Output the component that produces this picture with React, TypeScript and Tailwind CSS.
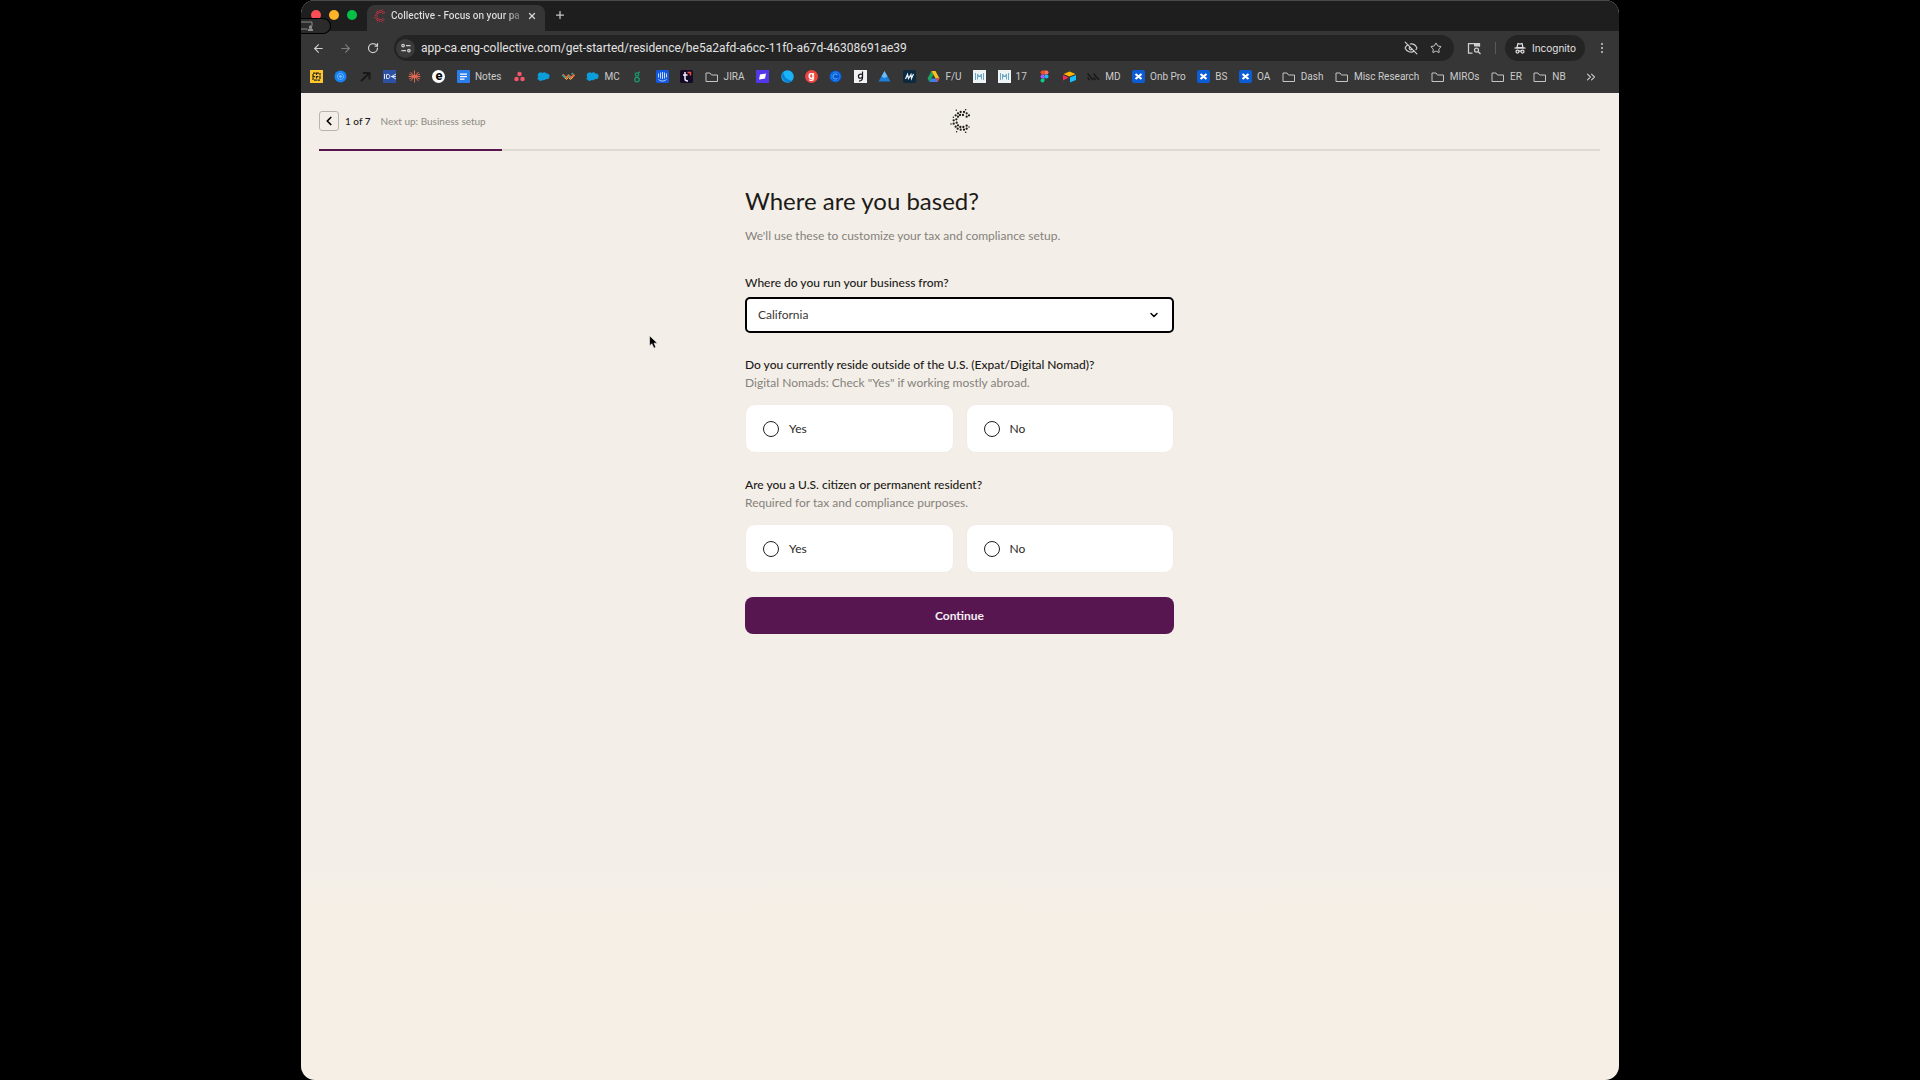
import { useState } from "react";
import type { ReactNode } from "react";
import {
  ArrowLeft,
  ArrowRight,
  ChevronDown,
  ChevronLeft,
  ChevronsRight,
  EyeOff,
  Plus,
  RotateCw,
  Star,
  X,
} from "lucide-react";

const LOGO_DOTS = [
  [119, 51], [129, 51], [111, 55], [137, 55], [104, 61], [117, 60], [126, 60],
  [137, 65], [144, 61], [111, 65], [98, 76], [106, 73], [98, 86], [107, 83],
  [104, 95], [111, 91], [110, 101], [118, 96], [127, 96], [137, 92],
  [137, 101], [119, 104], [129, 104],
];
const LOGO_SMALL_DOTS = [
  [106, 46], [134, 44], [97, 67], [90, 87], [144, 96], [107, 110], [134, 112],
];

const Logo = ({ className }: { className: string }) => (
  <svg viewBox="87 42 60 72" className={className} fill="currentColor">
    {LOGO_DOTS.map(([x, y]) => (
      <circle key={`${x}-${y}`} cx={x} cy={y} r="3.4" />
    ))}
    {LOGO_SMALL_DOTS.map(([x, y]) => (
      <circle key={`${x}-${y}`} cx={x} cy={y} r="2.2" />
    ))}
  </svg>
);

const Svg = ({ children }: { children: ReactNode }) => (
  <svg viewBox="0 0 26 26" className="size-[13px] shrink-0" fill="none">
    {children}
  </svg>
);

const FolderIcon = () => (
  <svg
    viewBox="0 0 28 24"
    className="h-3 w-[14px] shrink-0 text-[#c4c4c4]"
    fill="none"
    stroke="currentColor"
    strokeWidth="2"
  >
    <path d="M2 4h8l3 4h12v13H2z" strokeLinejoin="round" />
  </svg>
);

const Cloud = () => (
  <Svg>
    <path
      d="M3 14a5 5 0 0 1 1-8 6 6 0 0 1 7 0 6 6 0 0 1 8 1 5 5 0 0 1 6 6c0 4-3 6-7 5-2 3-5 3-7 2-3 3-7 2-8-1-3 0-3-3 0-5z"
      fill="#0c9ddb"
    />
  </Svg>
);

const Miro = () => (
  <Svg>
    <rect width="26" height="26" fill="#eef3f6" />
    <path d="M5 6v14M21 6v14M9 19V8l4 5 4-5v11M9 13h8" stroke="#6ba8c4" strokeWidth="2" />
  </Svg>
);

const Confluence = () => (
  <Svg>
    <rect width="26" height="26" rx="4" fill="#0b5cd5" />
    <path d="m7 8 12 10M19 8 7 18" stroke="#fff" strokeWidth="4.5" />
  </Svg>
);

type Bookmark = { icon: ReactNode; label?: string; name: string };

const bookmarks: Bookmark[] = [
  {
    name: "Grid",
    icon: (
      <Svg>
        <rect width="26" height="26" fill="#fcc62f" />
        <path d="M6 6h14v14H6zM13 5v16M5 13h16" stroke="#2a2418" strokeWidth="2.5" strokeDasharray="5 2" />
      </Svg>
    ),
  },
  {
    name: "Atom",
    icon: (
      <Svg>
        <circle cx="13" cy="13" r="12" fill="#1682f5" />
        <circle cx="13" cy="13" r="6" stroke="#8cc6ff" strokeWidth="2" strokeDasharray="3 1" />
        <circle cx="13" cy="13" r="2.5" fill="#8cc6ff" />
      </Svg>
    ),
  },
  {
    name: "Arrow",
    icon: (
      <Svg>
        <path d="M4 22 20 7M8 6h13v13" stroke="#191919" strokeWidth="4" />
      </Svg>
    ),
  },
  {
    name: "ID",
    icon: (
      <Svg>
        <rect width="26" height="26" fill="#2d51a3" />
        <path d="M3 8v10M7 9v8h3c5 0 5-8 0-8zM26 8l-9 5 9 5M16 13h10" stroke="#d9e2f5" strokeWidth="2" />
      </Svg>
    ),
  },
  {
    name: "Claude",
    icon: (
      <Svg>
        <path
          d="M13 1v24M1 13h24M5 4l16 18M21 4 5 22M2 8l22 10M24 8 2 18"
          stroke="#dd6a50"
          strokeWidth="2"
        />
      </Svg>
    ),
  },
  {
    name: "E",
    icon: (
      <span className="flex size-[13px] items-center justify-center rounded-full bg-white text-[13px] leading-none font-bold text-black">
        <span className="pb-[2px]">e</span>
      </span>
    ),
  },
  {
    name: "Notes",
    label: "Notes",
    icon: (
      <Svg>
        <rect width="26" height="26" rx="2" fill="#2b7de9" />
        <path d="M6 8h14M6 13h14M6 18h9" stroke="#fff" strokeWidth="2.5" />
      </Svg>
    ),
  },
  {
    name: "Asana",
    icon: (
      <Svg>
        <circle cx="13" cy="8" r="4.5" fill="#f0576a" />
        <circle cx="7" cy="18" r="4.5" fill="#f0576a" />
        <circle cx="19" cy="18" r="4.5" fill="#f0576a" />
      </Svg>
    ),
  },
  { name: "Salesforce", icon: <Cloud /> },
  {
    name: "Workato",
    icon: (
      <Svg>
        <path d="m1 9 7 7 5-5 5 5 7-7" stroke="#f0643c" strokeWidth="4" />
        <path d="m3 13 6 6 4-4 4 4 6-6" stroke="#f3b23f" strokeWidth="2" />
        <path d="m1 10 6 6M12 15l4-4M19 9l3-3" stroke="#27ae8f" strokeWidth="3" />
      </Svg>
    ),
  },
  { name: "MC", label: "MC", icon: <Cloud /> },
  {
    name: "Greenhouse",
    icon: (
      <Svg>
        <circle cx="12" cy="9" r="3.5" stroke="#179b6b" strokeWidth="2.5" />
        <circle cx="12" cy="19" r="4.5" stroke="#179b6b" strokeWidth="2.5" />
        <path d="M14 6c2 0 3-1 3-3" stroke="#179b6b" strokeWidth="2.5" />
      </Svg>
    ),
  },
  {
    name: "Intercom",
    icon: (
      <Svg>
        <rect width="26" height="26" rx="3" fill="#1258e0" />
        <path d="M5 7v8M9 5v12M13 4v14M17 5v12M21 7v8M5 19c5 4 11 4 16 0" stroke="#c9dcff" strokeWidth="2" />
      </Svg>
    ),
  },
  {
    name: "T",
    icon: (
      <Svg>
        <rect width="26" height="26" rx="3" fill="#150a26" />
        <path d="M10 4v14c0 3 2 4 6 4M6 10h9" stroke="#f5f0ff" strokeWidth="3" />
        <path d="M15 5h6v6" stroke="#f0503c" strokeWidth="3" />
      </Svg>
    ),
  },
  { name: "JIRA", label: "JIRA", icon: <FolderIcon /> },
  {
    name: "Purple",
    icon: (
      <Svg>
        <rect width="26" height="26" fill="#5238e8" />
        <path d="m8 9 12-2-2 10-12 2z" fill="#fff" />
      </Svg>
    ),
  },
  {
    name: "Sphere",
    icon: (
      <Svg>
        <circle cx="13" cy="13" r="12.5" fill="#19b4f5" />
        <path d="M5 4c0 9 6 15 17 18A12.5 12.5 0 0 1 5 4z" fill="#0a7fd6" />
      </Svg>
    ),
  },
  {
    name: "G",
    icon: (
      <span className="flex size-[13px] items-center justify-center rounded-full bg-[#ee443f] text-[11px] leading-none font-bold text-white">
        <span className="pb-[3px]">g</span>
      </span>
    ),
  },
  {
    name: "C",
    icon: (
      <Svg>
        <circle cx="13" cy="13" r="12" fill="#0a55c8" />
        <circle cx="13" cy="13" r="9" stroke="#1f8bff" strokeWidth="2" />
        <path d="M17 10a5 5 0 1 0 0 6" stroke="#46a3ff" strokeWidth="2.5" />
      </Svg>
    ),
  },
  {
    name: "Gd",
    icon: (
      <Svg>
        <rect width="26" height="26" fill="#f2f2f5" />
        <path d="M17 3v12c0 4-2 7-7 7M17 9c-6-2-9 1-8 5s6 3 8-1" stroke="#1b1b22" strokeWidth="2.5" />
      </Svg>
    ),
  },
  {
    name: "Peak",
    icon: (
      <Svg>
        <path d="M13 2 25 23H1z" fill="#1c7fdc" />
        <path d="M13 2 19 13l-6 3-6-3z" fill="#6cbcf5" />
      </Svg>
    ),
  },
  {
    name: "M",
    icon: (
      <Svg>
        <rect width="26" height="26" rx="3" fill="#0c2a3f" />
        <path d="m5 18 4-9 2 8 5-8 1 8 4-9" stroke="#e6f2fa" strokeWidth="2.5" />
      </Svg>
    ),
  },
  {
    name: "Drive",
    label: "F/U",
    icon: (
      <Svg>
        <path d="M9 2 1 17l4 7 8-15z" fill="#1da562" />
        <path d="M9 2h8l8 15h-8z" fill="#fbbf1b" />
        <path d="M9 17h16l-4 7H5z" fill="#3f7ff0" />
        <path d="M25 17h-8l4 7z" fill="#e8453c" />
      </Svg>
    ),
  },
  { name: "Metrics", icon: <Miro /> },
  { name: "17", label: "17", icon: <Miro /> },
  {
    name: "Figma",
    icon: (
      <Svg>
        <path d="M13 1H9a4 4 0 0 0 0 8h4z" fill="#f24e1e" />
        <path d="M13 1h4a4 4 0 0 1 0 8h-4z" fill="#ff7262" />
        <path d="M13 9H9a4 4 0 0 0 0 8h4z" fill="#a259ff" />
        <circle cx="17" cy="13" r="4" fill="#1abcfe" />
        <path d="M9 17h4v4a4 4 0 1 1-4-4z" fill="#0acf83" />
      </Svg>
    ),
  },
  {
    name: "Airtable",
    icon: (
      <Svg>
        <path d="m1 8 12-5 12 5-12 5z" fill="#fcb400" />
        <path d="M14 15 26 10v10l-12 5z" fill="#18bfff" />
        <path d="m0 10 11 5-11 6z" fill="#f82b60" />
      </Svg>
    ),
  },
  {
    name: "MD",
    label: "MD",
    icon: (
      <Svg>
        <path d="m1 7 11 13M13 7l11 13M1 15l4 5M13 15l4 5" stroke="#181818" strokeWidth="3" />
      </Svg>
    ),
  },
  { name: "Onb Pro", label: "Onb Pro", icon: <Confluence /> },
  { name: "BS", label: "BS", icon: <Confluence /> },
  { name: "OA", label: "OA", icon: <Confluence /> },
  { name: "Dash", label: "Dash", icon: <FolderIcon /> },
  { name: "Misc Research", label: "Misc Research", icon: <FolderIcon /> },
  { name: "MIROs", label: "MIROs", icon: <FolderIcon /> },
  { name: "ER", label: "ER", icon: <FolderIcon /> },
  { name: "NB", label: "NB", icon: <FolderIcon /> },
];

const TabStrip = () => (
  <div className="flex h-[31px] items-end border-t border-[#4a4a4a] bg-[#1e1e1e] pl-[10px]">
    <div className="flex h-[30px] items-center gap-2 pb-[2px]">
      <span className="size-[10px] rounded-full bg-[#fb4d55]" />
      <span className="size-[10px] rounded-full bg-[#fdb429]" />
      <span className="size-[10px] rounded-full bg-[#05c046]" />
    </div>
    <div className="ml-[10px] flex h-[26px] w-[178px] items-center rounded-t-lg bg-[#363636] pr-2 pb-[5px] pl-[6px]">
      <Logo className="h-[14px] w-3 shrink-0 text-[#d83049]" />
      <span className="ml-[6px] flex-1 bg-linear-to-r from-[#dedede] from-85% to-[#363636] bg-clip-text font-['Roboto',sans-serif] text-[10px] leading-4 font-medium whitespace-nowrap text-transparent">
        Collective - Focus on your pa
      </span>
      <button aria-label="Close tab" className="text-[#d8d8d8]">
        <X className="size-[10px]" strokeWidth={3} />
      </button>
    </div>
    <button aria-label="New tab" className="ml-[9px] pb-[10px] text-[#c8c8c8]">
      <Plus className="size-3" strokeWidth={2.5} />
    </button>
  </div>
);

const Toolbar = () => (
  <div className="flex h-[34px] items-center bg-[#363636] pr-4 pl-[11px] text-[#cfcfcf]">
    <button aria-label="Back">
      <ArrowLeft className="size-[13px]" strokeWidth={2} />
    </button>
    <button aria-label="Forward" className="ml-[14px] text-[#7d7d7d]">
      <ArrowRight className="size-[13px]" strokeWidth={2} />
    </button>
    <button aria-label="Reload" className="ml-[15px]">
      <RotateCw className="size-3" strokeWidth={2.5} />
    </button>
    <div className="ml-[15px] flex h-[26px] flex-1 items-center rounded-full bg-[#242424] pr-3 pl-[2px]">
      <button
        aria-label="Site settings"
        className="flex size-[19px] items-center justify-center rounded-full bg-[#3a3a3a]"
      >
        <svg viewBox="0 0 24 24" className="size-[10px]" fill="none" stroke="currentColor" strokeWidth="3">
          <circle cx="5" cy="6" r="3" />
          <path d="M12 6h11M1 18h11" />
          <circle cx="19" cy="18" r="3" />
        </svg>
      </button>
      <input
        aria-label="Address"
        className="ml-[6px] min-w-0 flex-1 bg-transparent font-['Roboto',sans-serif] text-xs text-[#e2e2e2] outline-none"
        defaultValue="app-ca.eng-collective.com/get-started/residence/be5a2afd-a6cc-11f0-a67d-46308691ae39"
      />
      <EyeOff className="size-[14px]" strokeWidth={2} />
      <button aria-label="Bookmark this tab" className="ml-3">
        <Star className="size-3" strokeWidth={2} />
      </button>
    </div>
    <button aria-label="Search side panel" className="ml-[13px]">
      <svg viewBox="0 0 28 26" className="h-[13px] w-[14px]" fill="none" stroke="currentColor" strokeWidth="2.5">
        <path d="M11 22H3V3h22v6" />
        <path d="M14 2h12v7H14z" fill="currentColor" stroke="none" />
        <circle cx="19" cy="16" r="4" />
        <path d="m22 19 5 5" />
      </svg>
    </button>
    <span className="ml-[14px] h-3 w-px bg-[#5a5a5a]" />
    <div className="ml-[9px] flex h-[26px] w-20 items-center gap-[6px] rounded-full bg-[#242424] pl-[9px] text-[#e2e2e2]">
      <svg viewBox="0 0 24 24" className="size-3 shrink-0" fill="none" stroke="currentColor" strokeWidth="2.5">
        <path d="M1 12h22" />
        <path d="m6 11 2-8 4 1 4-1 2 8z" />
        <circle cx="7" cy="19" r="3" />
        <circle cx="17" cy="19" r="3" />
        <path d="M10 18h4" />
      </svg>
      <span className="text-[10px] leading-4">Incognito</span>
    </div>
    <button aria-label="Menu" className="ml-4 flex flex-col gap-[2px]">
      <span className="size-[2px] rounded-full bg-[#cfcfcf]" />
      <span className="size-[2px] rounded-full bg-[#cfcfcf]" />
      <span className="size-[2px] rounded-full bg-[#cfcfcf]" />
    </button>
  </div>
);

const BookmarksBar = () => (
  <div className="flex h-7 items-center bg-[#363636] pr-[21px] pb-[5px] pl-[9px]">
    <nav aria-label="Bookmarks" className="flex flex-1 items-center justify-between">
      {bookmarks.map(({ icon, label, name }) => (
        <a
          key={name}
          href="#"
          aria-label={name}
          className="flex items-center gap-[5px] font-['Roboto',sans-serif] text-[10px] leading-4 whitespace-nowrap text-[#cccccc]"
        >
          {icon}
          {label}
        </a>
      ))}
    </nav>
    <button aria-label="More bookmarks" className="ml-[18px] text-[#c4c4c4]">
      <ChevronsRight className="size-[14px]" strokeWidth={2} />
    </button>
  </div>
);

const YesNoQuestion = ({
  name,
  question,
  hint,
}: {
  name: string;
  question: string;
  hint: string;
}) => (
  <fieldset className="mt-[23px]">
    <legend className="text-xs leading-[18px] font-medium text-[#1d1b18]">
      {question}
    </legend>
    <p className="text-xs leading-[18px] text-[#85817b]">{hint}</p>
    <div className="mt-3 grid grid-cols-2 gap-3">
      {["Yes", "No"].map((option) => (
        <label
          key={option}
          className="flex h-[49px] items-center gap-[10px] rounded-[10px] border border-[#f1ece5] bg-white pl-[17px] text-xs text-[#2b2926]"
        >
          <input
            type="radio"
            name={name}
            value={option}
            className="size-4 appearance-none rounded-full border border-[#22201e] bg-white checked:border-[5px]"
          />
          {option}
        </label>
      ))}
    </div>
  </fieldset>
);

const ResidenceForm = () => {
  const [location, setLocation] = useState("California");

  return (
    <form
      className="mx-auto mt-[35px] w-full max-w-[429px]"
      onSubmit={(e) => e.preventDefault()}
    >
      <h1 className="text-2xl leading-[30px] text-[#1d1b18]">Where are you based?</h1>
      <p className="mt-[11px] text-xs leading-[18px] text-[#85817b]">
        We'll use these to customize your tax and compliance setup.
      </p>
      <label
        htmlFor="location"
        className="mt-[29px] block text-xs leading-[18px] font-medium text-[#1d1b18]"
      >
        Where do you run your business from?
      </label>
      <div className="relative mt-[5px]">
        <select
          id="location"
          value={location}
          onChange={(e) => setLocation(e.target.value)}
          className="h-9 w-full appearance-none rounded-[5px] border-2 border-black bg-white px-[11px] text-xs text-[#3a3835] outline-none"
        >
          <option>California</option>
          <option>New York</option>
          <option>Texas</option>
        </select>
        <ChevronDown
          className="pointer-events-none absolute top-3 right-[14px] size-3 text-black"
          strokeWidth={3}
        />
      </div>
      <YesNoQuestion
        name="abroad"
        question="Do you currently reside outside of the U.S. (Expat/Digital Nomad)?"
        hint={'Digital Nomads: Check "Yes" if working mostly abroad.'}
      />
      <YesNoQuestion
        name="citizen"
        question="Are you a U.S. citizen or permanent resident?"
        hint="Required for tax and compliance purposes."
      />
      <button className="mt-6 h-[37px] w-full rounded-lg bg-[#571650] text-xs font-bold text-[#f6eef5]">
        Continue
      </button>
    </form>
  );
};

const App = () => {
  return (
    <div className="min-h-screen bg-black px-[301px]">
      <div className="relative flex min-h-screen flex-col overflow-hidden rounded-[14px] bg-linear-to-b from-[#f3efe8] from-80% to-[#f6efe6] to-85% font-['Inter',sans-serif]">
        <TabStrip />
        <Toolbar />
        <BookmarksBar />

        {/* Screen sharing badge */}
        <div className="absolute top-[18px] left-0 flex h-4 w-[30px] items-center rounded-r-full border border-l-0 border-black bg-[#2b2b2b] text-[#8d8d8d]">
          <svg viewBox="0 0 24 20" className="h-[10px] w-3" fill="none" stroke="currentColor" strokeWidth="2">
            <path d="M0 2h22v8M0 16h13" />
            <circle cx="19" cy="12" r="2.5" fill="currentColor" />
            <path d="M14 19c0-5 10-5 10 0z" fill="currentColor" />
          </svg>
        </div>

        <main className="flex flex-1 flex-col pr-[19px] pl-[18px] font-['Lato',sans-serif]">
          <header className="mt-[18px] grid grid-cols-3 items-center">
            <div className="flex items-center">
              <button
                aria-label="Go back"
                className="flex size-5 items-center justify-center rounded-[3px] border border-[#b9b4ad] text-black"
              >
                <ChevronLeft className="size-[14px]" strokeWidth={3} />
              </button>
              <span className="ml-[6px] text-[10px] leading-5 font-medium text-[#1d1b18]">
                1 of 7
              </span>
              <span className="ml-[10px] text-[10px] leading-5 text-[#8d8983]">
                Next up: Business setup
              </span>
            </div>
            <div className="flex h-5 items-center justify-center">
              <Logo className="h-6 w-5 text-[#1d1b18]" />
            </div>
          </header>
          <div
            role="progressbar"
            aria-label="Onboarding progress"
            aria-valuemin={0}
            aria-valuemax={7}
            aria-valuenow={1}
            className="mt-[18px] h-[2px] bg-[#dfdad4]"
          >
            <div className="h-full w-1/7 bg-[#571650]" />
          </div>
          <ResidenceForm />
        </main>

        {/* Mouse pointer */}
        <svg
          viewBox="0 0 16 24"
          className="pointer-events-none absolute top-[335px] left-[348px] h-[14px] w-[9px]"
        >
          <path
            d="M1 1v18l4-4 4 8 3-2-3-7h6z"
            fill="#000"
            stroke="#fff"
            strokeWidth="1"
          />
        </svg>
      </div>
    </div>
  );
};

export default App;
